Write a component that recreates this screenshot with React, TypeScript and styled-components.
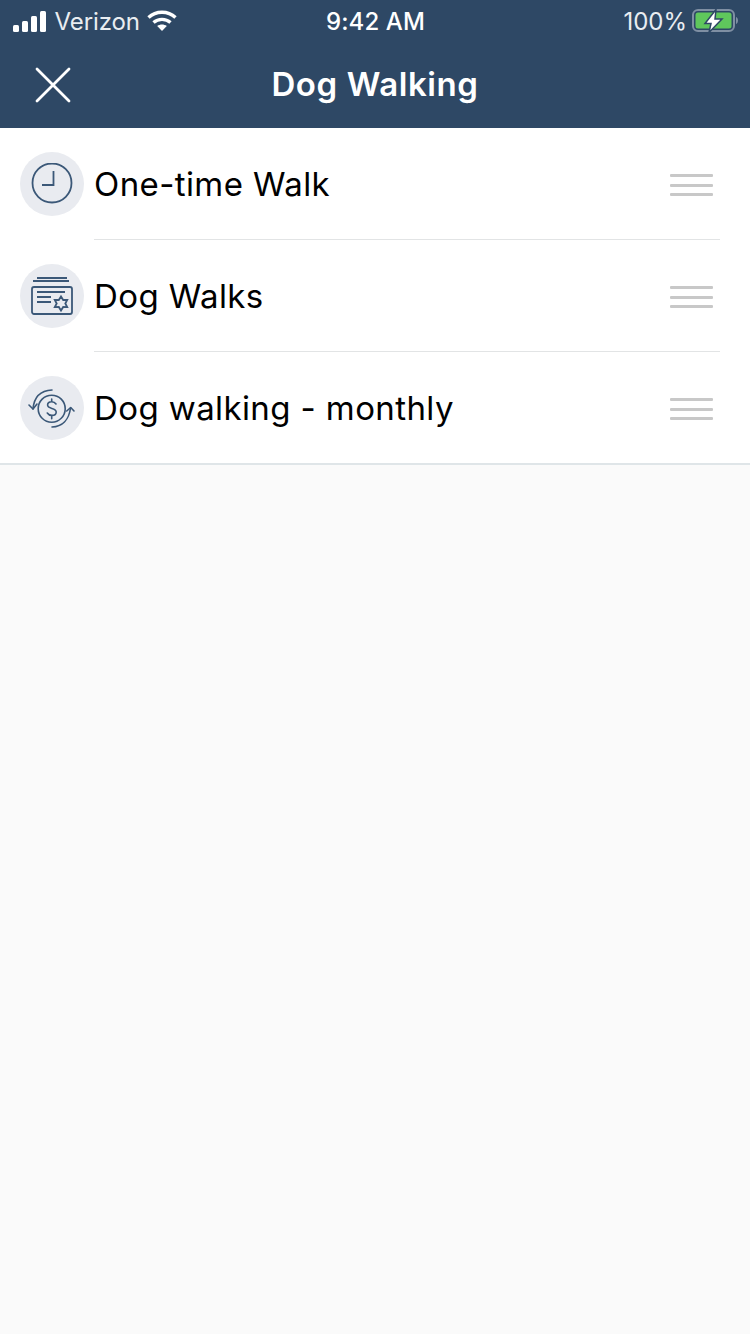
import React from "react";
import styled, { createGlobalStyle } from "styled-components";

const Global = createGlobalStyle`
  html, body { margin: 0; padding: 0; background: #fafafa; }
  #root { min-height: 1334px; }
  * { box-sizing: border-box; }
`;
const Page = styled.div`
  width: 750px;
  height: 1334px;
  background: #fafafa;
  font-family: Inter, "Liberation Sans", sans-serif;
  display: flex;
  flex-direction: column;
`;
const Header = styled.header`
  height: 128px;
  flex: none;
  background: #2e4865;
  color: #fff;
  display: flex;
  flex-direction: column;
`;
const StatusBar = styled.div`
  height: 40px;
  padding: 2px 12px 0 13px;
  display: grid;
  grid-template-columns: 1fr auto 1fr;
  align-items: center;
  font-size: 24px;
`;
const StatusLeft = styled.div`
  display: flex;
  align-items: center;
  gap: 7.5px;
  font-weight: 400;
  letter-spacing: -0.1px;
  color: #e9edf1;
`;
const StatusTime = styled.div`
  font-weight: 500;
  letter-spacing: 0.1px;
`;
const StatusRight = styled.div`
  display: flex;
  align-items: center;
  justify-content: flex-end;
  gap: 4px;
  color: #e9edf1;
`;
const NavBar = styled.div`
  flex: 1;
  position: relative;
  display: flex;
  align-items: center;
  justify-content: center;
  padding-bottom: 1px;
`;
const CloseButton = styled.div`
  position: absolute;
  left: 35px;
  top: 27px;
  width: 36px;
  height: 36px;
  display: flex;
`;
const Title = styled.h1`
  margin: 0;
  font-size: 33px;
  line-height: 40px;
  font-weight: 600;
  letter-spacing: 0.6px;
`;
const List = styled.div`
  flex: none;
  background: #fff;
  border-bottom: 2px solid #dfe5e8;
  height: 337px;
  display: flex;
  flex-direction: column;
`;
const Row = styled.div`
  height: 112px;
  flex: none;
  padding-left: 20px;
  display: flex;
  align-items: center;
  position: relative;
`;
const Separator = styled.div`
  position: absolute;
  left: 94px;
  right: 30px;
  bottom: 0;
  height: 1px;
  background: #e2e4e5;
`;
const IconCircle = styled.div`
  width: 64px;
  height: 64px;
  border-radius: 50%;
  background: #e9ebf0;
  display: flex;
  align-items: center;
  justify-content: center;
  flex: none;
`;
const Label = styled.div`
  margin-left: 10px;
  flex: 1;
  font-size: 33px;
  line-height: 40px;
  color: #000;
  letter-spacing: 0.4px;
`;
const Handle = styled.div`
  width: 43px;
  margin: 2px 37px 0 0;
  display: flex;
  flex-direction: column;
  gap: 6.5px;
`;
const HandleLine = styled.div`
  height: 3px;
  background: #c8c8c8;
  border-radius: 1px;
`;

const items = [
  {
    label: "One-time Walk",
    icon: (
      <svg width="42" height="42" viewBox="0 0 42 42" fill="none" stroke="#3b5878" strokeWidth="1.8">
        <circle cx="21" cy="20" r="19.500" />
        <path d="M22.500 8v14H11" />
      </svg>
    ),
  },
  {
    label: "Dog Walks",
    icon: (
      <svg width="44" height="44" viewBox="0 0 44 44" fill="none" stroke="#3b5878" strokeWidth="1.800">
        <path d="M7 4h30M3 7h36" />
        <rect x="2" y="13" width="40" height="27" rx="2" />
        <path d="M7 18h28M7 23h14M7 28h14" />
        <path d="M31 22.500l2.200 3.500 4-.1-1.900 3.600 1.900 3.600-4-.1-2.200 3.500-2.200-3.500-4 .1 1.900-3.600-1.900-3.600 4 .1z" fill="#e9ebf0" />
      </svg>
    ),
  },
  {
    label: "Dog walking - monthly",
    icon: (
      <svg width="48" height="48" viewBox="0 0 48 48" fill="none" stroke="#3b5878" strokeWidth="1.600" strokeLinecap="round" strokeLinejoin="round">
        <circle cx="23.700" cy="24.700" r="13.500" />
        <path d="M28 20c-1-1.500-2.500-2.200-4.300-2.200-2.300 0-4.100 1.300-4.100 3.300 0 4.400 8.600 2.300 8.600 6.900 0 2.100-1.900 3.400-4.300 3.400-1.900 0-3.600-.8-4.600-2.400M23.700 15v2.800M23.700 31.400v3.300" />
        <path d="M24 6C13 6.500 6 13 5 25" />
        <path d="M1 21l4 4 4-5" />
        <path d="M24 43c10-.5 17-7 18.500-19" />
        <path d="M38.700 27l4-3.500 3.300 3.500" />
      </svg>
    ),
  },
];

export default function App() {
  return (
    <Page>
      <Global />
      <Header>
        <StatusBar>
          <StatusLeft>
            <svg width="34" height="21" viewBox="0 0 34 21" fill="#fff">
              <rect x="0" y="14" width="6" height="7" rx="1.500" />
              <rect x="9" y="10" width="6" height="11" rx="1.500" />
              <rect x="18" y="5" width="6" height="16" rx="1.500" />
              <rect x="27" y="0" width="6" height="21" rx="1.500" />
            </svg>
            <span>Verizon</span>
            <svg width="30" height="22" viewBox="0 0 30 22" fill="none" stroke="#fff" strokeWidth="3.400">
              <path d="M1.500 7.500C9 0.500 21 0.500 28.500 7.500" />
              <path d="M6.500 12.500c4.800-4.200 12.200-4.200 17 0" />
              <path d="M15 21l-4.800-5c2.800-2 6.800-2 9.600 0z" fill="#fff" stroke="none" />
            </svg>
          </StatusLeft>
          <StatusTime>9:42 AM</StatusTime>
          <StatusRight>
            <span>100%</span>
            <svg width="47" height="24" viewBox="0 0 47 24" fill="none">
              <rect x="2" y="1" width="41" height="21" rx="5" stroke="#7f8fa3" strokeWidth="2" />
              <rect x="4.500" y="3.500" width="36" height="16" rx="2.500" fill="#5fc75c" />
              <path d="M45 8v7c1.300-.4 2-2 2-3.500s-.7-3.100-2-3.500z" fill="#7f8fa3" />
              <path d="M25 0.500L14 14.500h6L18 23.500l13-13.500h-7z" fill="#fff" stroke="#2e4865" strokeWidth="1.500" />
            </svg>
          </StatusRight>
        </StatusBar>
        <NavBar>
          <CloseButton>
            <svg width="36" height="36" viewBox="0 0 36 36" stroke="#fff" strokeWidth="2.800" strokeLinecap="round">
              <path d="M2 2l32 32M34 2L2 34" />
            </svg>
          </CloseButton>
          <Title>Dog Walking</Title>
        </NavBar>
      </Header>
      <List>
        {items.map((item, i) => (
          <Row key={item.label}>
            <IconCircle>{item.icon}</IconCircle>
            <Label>{item.label}</Label>
            <Handle>
              <HandleLine />
              <HandleLine />
              <HandleLine />
            </Handle>
            {i < items.length - 1 && <Separator />}
          </Row>
        ))}
      </List>
    </Page>
  );
}
